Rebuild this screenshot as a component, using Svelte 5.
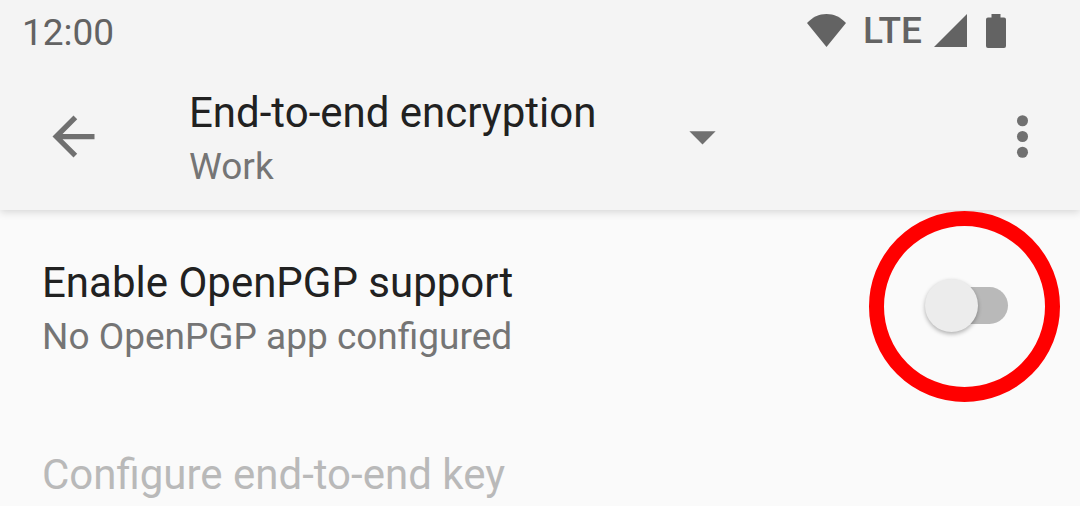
<script>
  let account = $state('work');
  let openPgp = $state(false);
</script>

<div class="screen">
  <header class="app-bar">
    <div class="status-bar">
      <time class="clock">12:00</time>
      <div class="status-icons">
        <svg class="wifi" width="39" height="33" viewBox="0 0 39 33" aria-hidden="true">
          <path d="M0 9C5.5 3.2 12 0 19.500 0S33.500 3.200 39 9L19.500 33z" />
        </svg>
        <span class="network">LTE</span>
        <svg class="signal" width="33" height="33" viewBox="0 0 33 33" aria-hidden="true">
          <path d="M33 0V33H0z" />
        </svg>
        <svg class="battery" width="20" height="34" viewBox="0 0 20 34" aria-hidden="true">
          <path d="M5.500 0h9v3.500H18a2 2 0 0 1 2 2V32a2 2 0 0 1-2 2H2a2 2 0 0 1-2-2V5.500a2 2 0 0 1 2-2h3.500z" />
        </svg>
      </div>
    </div>

    <div class="toolbar">
      <button class="icon-button" type="button" aria-label="Back">
        <svg viewBox="0 0 24 24" aria-hidden="true">
          <path d="M20 11H7.830l5.590-5.590L12 4l-8 8 8 8 1.410-1.410L7.830 13H20v-2z" />
        </svg>
      </button>

      <label class="spinner" for="account">
        <span class="texts">
          <span class="title">End-to-end encryption</span>
          <select id="account" class="subtitle" bind:value={account}>
            <option value="work">Work</option>
          </select>
        </span>
        <svg class="arrow" viewBox="0 0 24 24" aria-hidden="true">
          <path d="M7 10l5 5 5-5z" />
        </svg>
      </label>

      <button class="icon-button more" type="button" aria-label="More options">
        <svg viewBox="0 0 24 24" aria-hidden="true">
          <circle cx="12" cy="6" r="2.100" />
          <circle cx="12" cy="12" r="2.100" />
          <circle cx="12" cy="18" r="2.100" />
        </svg>
      </button>
    </div>
  </header>

  <main class="preferences">
    <div class="row">
      <label class="texts" for="openpgp">
        <span class="title">Enable OpenPGP support</span>
        <span class="subtitle">No OpenPGP app configured</span>
      </label>
      <div class="switch-box">
        <input id="openpgp" class="switch" type="checkbox" role="switch" bind:checked={openPgp} />
        <span class="ring"></span>
      </div>
    </div>

    <button class="row title" type="button" disabled={!openPgp}>Configure end-to-end key</button>
  </main>
</div>

<style>
  :global(body) {
    margin: 0;
    background: #fafafa;
  }

  .screen {
    min-height: 100vh;
    display: flex;
    flex-direction: column;
    font-family: Roboto, sans-serif;
    color: #212121;
  }

  button,
  select {
    margin: 0;
    padding: 0;
    border: 0;
    background: none;
    font-family: inherit;
    text-align: left;
  }

  svg {
    display: block;
    flex: none;
    fill: currentColor;
  }

  .app-bar {
    background: #f4f4f4;
    box-shadow: 0 2px 8px rgba(0, 0, 0, 0.15);
  }

  .status-bar {
    display: flex;
    justify-content: space-between;
    align-items: flex-start;
    padding: 0 74px 0 22px;
    color: #636363;
    font-size: 37px;
    line-height: 63px;
  }

  .clock {
    padding-top: 2px;
    line-height: 61px;
    height: 61px;
    box-sizing: content-box;
  }

  .status-icons {
    display: flex;
    align-items: center;
    height: 61px;
  }

  .network {
    font-weight: 500;
    margin: 0 12px 0 17px;
  }

  .battery {
    margin-left: 19px;
  }

  .toolbar {
    display: flex;
    align-items: center;
    height: 147px;
    padding: 0 26px 0 42px;
    color: #707070;
  }

  .icon-button {
    flex: none;
    color: inherit;
  }

  .icon-button svg,
  .arrow {
    width: 63px;
    height: 63px;
  }

  .spinner {
    display: flex;
    align-items: center;
    justify-content: space-between;
    flex: 0 1 545px;
    min-width: 0;
    margin-left: 84px;
  }

  .spinner .texts {
    padding-top: 5px;
  }

  .more {
    margin-left: auto;
  }

  .texts {
    display: flex;
    flex-direction: column;
    flex: 1;
    min-width: 0;
  }

  .title {
    font-size: 42px;
    line-height: 56px;
    color: #212121;
    white-space: nowrap;
  }

  .subtitle {
    font-size: 37px;
    line-height: 52px;
    color: #757575;
  }

  select.subtitle {
    appearance: none;
    height: 52px;
  }

  .preferences {
    display: flex;
    flex-direction: column;
    padding-top: 3px;
  }

  .row {
    display: flex;
    align-items: flex-start;
    padding: 42px 72px 42px 42px;
  }

  button.row {
    padding-bottom: 0;
  }

  button.row:disabled {
    color: #b9b9b9;
  }

  .switch-box {
    position: relative;
    flex: none;
    margin-top: 24px;
  }

  .switch {
    appearance: none;
    display: grid;
    align-items: center;
    width: 83px;
    height: 53px;
    margin: 0;
  }

  .switch::before,
  .switch::after {
    content: '';
    grid-area: 1 / 1;
  }

  .switch::before {
    height: 37px;
    margin-left: 8px;
    border-radius: 19px;
    background: #b9b9b9;
  }

  .switch::after {
    width: 53px;
    height: 53px;
    border-radius: 50%;
    background: #ececec;
    box-shadow: 0 2px 4px rgba(0, 0, 0, 0.3);
  }

  .switch:checked::after {
    justify-self: end;
  }

  .ring {
    position: absolute;
    top: -68px;
    left: -56px;
    box-sizing: border-box;
    width: 191px;
    height: 191px;
    border: 15px solid #ff0000;
    border-radius: 50%;
    pointer-events: none;
  }
</style>
